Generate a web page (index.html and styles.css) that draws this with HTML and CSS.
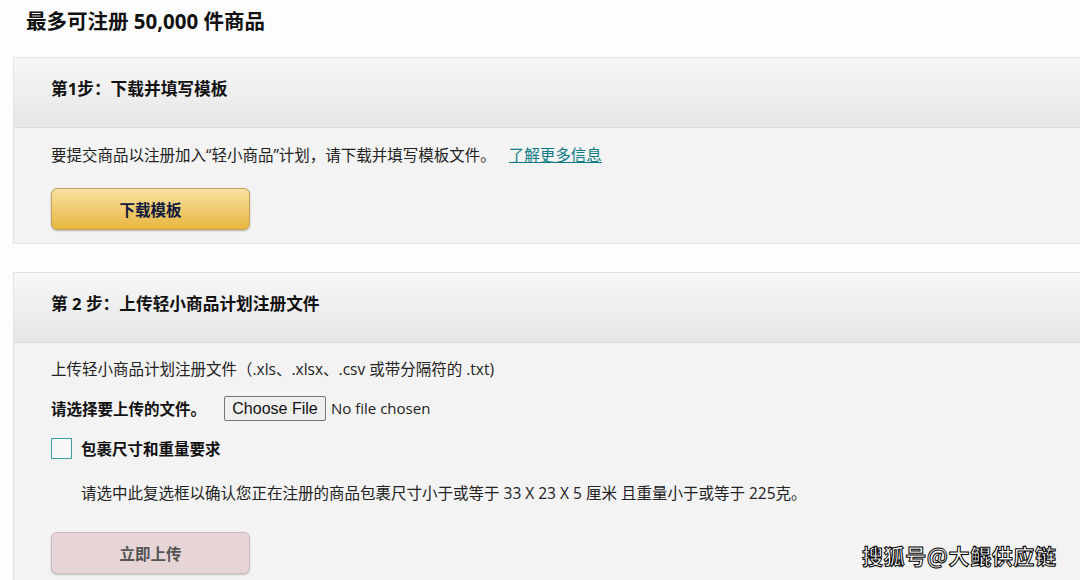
FILE: index.html
```html
<!DOCTYPE html>
<html lang="zh-CN">
<head>
<meta charset="utf-8">
<link rel="stylesheet" href="styles.css">
</head>
<body>
<div class="page">
  <h1 class="title">最多可注册 50,000 件商品</h1>

  <section class="box">
    <div class="box-head">第1步：下载并填写模板</div>
    <div class="box-body step1">
      <p class="line">要提交商品以注册加入“轻小商品”计划，请下载并填写模板文件。 <a class="link" href="#">了解更多信息</a></p>
      <button class="btn btn-gold">下载模板</button>
    </div>
  </section>

  <section class="box box2">
    <div class="box-head">第 2 步：上传轻小商品计划注册文件</div>
    <div class="box-body step2">
      <p class="line">上传轻小商品计划注册文件（.xls、.xlsx、.csv 或带分隔符的 .txt)</p>
      <div class="file-row">
        <span class="label">请选择要上传的文件。</span>
        <input class="file" type="file">
      </div>
      <label class="check-row">
        <span class="check"></span>
        <span class="label">包裹尺寸和重量要求</span>
      </label>
      <p class="line note">请选中此复选框以确认您正在注册的商品包裹尺寸小于或等于 33 X 23 X 5 厘米 且重量小于或等于 225克。</p>
      <button class="btn btn-disabled">立即上传</button>
    </div>
  </section>
</div>
<div class="watermark">搜狐号@大鲲供应链</div>
</body>
</html>
```
FILE: styles.css
```css
html, body {
  margin: 0;
  padding: 0;
  background: #fdfdfd;
  overflow: hidden;
  width: 1080px;
  height: 580px;
}
body {
  font-family: "Open Sans", "Noto Sans CJK SC", sans-serif;
  color: #111;
  position: relative;
}
.page {
  padding: 7px 0 0 13px;
}
.title {
  margin: 0 0 0 13px;
  font-size: 20.5px;
  line-height: 28px;
  font-weight: 700;
  color: #111;
  height: 50px;
}
.box {
  border: 1px solid #e3e3e3;
  border-right: none;
  background: #f3f3f3;
}
.box2 {
  margin-top: 28px;
}
.box-head {
  height: 70px;
  box-sizing: border-box;
  display: flex;
  align-items: center;
  padding-left: 37px;
  padding-bottom: 9px;
  font-size: 16.7px;
  font-weight: 700;
  background: linear-gradient(#f7f7f7, #e6e6e6);
  border-bottom: 1px solid #dadada;
}
.box-body {
  padding-left: 37px;
}
.step1 {
  padding-top: 17px;
  padding-bottom: 13px;
}
.step2 {
  padding-top: 16px;
  height: 300px;
}
.line {
  margin: 0;
  font-size: 15.5px;
  line-height: 20px;
  color: #222;
}
.link {
  color: #0e7c86;
  text-decoration: underline;
  margin-left: 9px;
}
.btn {
  display: flex;
  align-items: center;
  justify-content: center;
  width: 199px;
  height: 42px;
  border-radius: 6px;
  font-family: "Open Sans", "Noto Sans CJK SC", sans-serif;
  font-size: 15.5px;
  font-weight: 700;
  padding: 0;
}
.btn-gold {
  margin-top: 23px;
  background: linear-gradient(#f8e0a2, #e9b640);
  border: 1px solid #c3a058;
  color: #0f1a3c;
  box-shadow: 0 1px 2px rgba(0,0,0,0.25);
}
.file-row {
  margin-top: 17px;
  display: flex;
  align-items: center;
  height: 25px;
}
.label {
  font-size: 15.5px;
  font-weight: 700;
  color: #111;
}
.file-row .label {
  width: 173px;
}
.file {
  font-family: "Open Sans", "Liberation Sans", sans-serif;
  font-size: 15px;
  color: #222;
}
.file::file-selector-button {
  font-family: "Liberation Sans", Arial, sans-serif;
  font-size: 16px;
  height: 25px;
  width: 102px;
  padding: 0;
  margin-right: 5px;
  background: #efefef;
  border: 1px solid #767676;
  border-radius: 2px;
  color: #111;
}
.check-row {
  margin-top: 17px;
  display: flex;
  align-items: center;
  height: 21px;
}
.check {
  box-sizing: border-box;
  width: 21px;
  height: 21px;
  border: 1.5px solid #3e9e9c;
  background: #f7f7f7;
  margin-right: 9px;
}
.note {
  margin-top: 24px;
  margin-left: 30px;
}
.btn-disabled {
  margin-top: 29px;
  background: #e7d4d6;
  border: 1px solid #c8b9ba;
  color: #555;
  box-shadow: 0 1px 2px rgba(0,0,0,0.2);
}
.watermark {
  position: absolute;
  left: 862px;
  top: 540px;
  font-family: "Noto Sans CJK SC", sans-serif;
  font-size: 21px;
  font-weight: 700;
  line-height: 30px;
  letter-spacing: 0.6px;
  color: #fff;
  -webkit-text-stroke: 1px #000;
}
```
